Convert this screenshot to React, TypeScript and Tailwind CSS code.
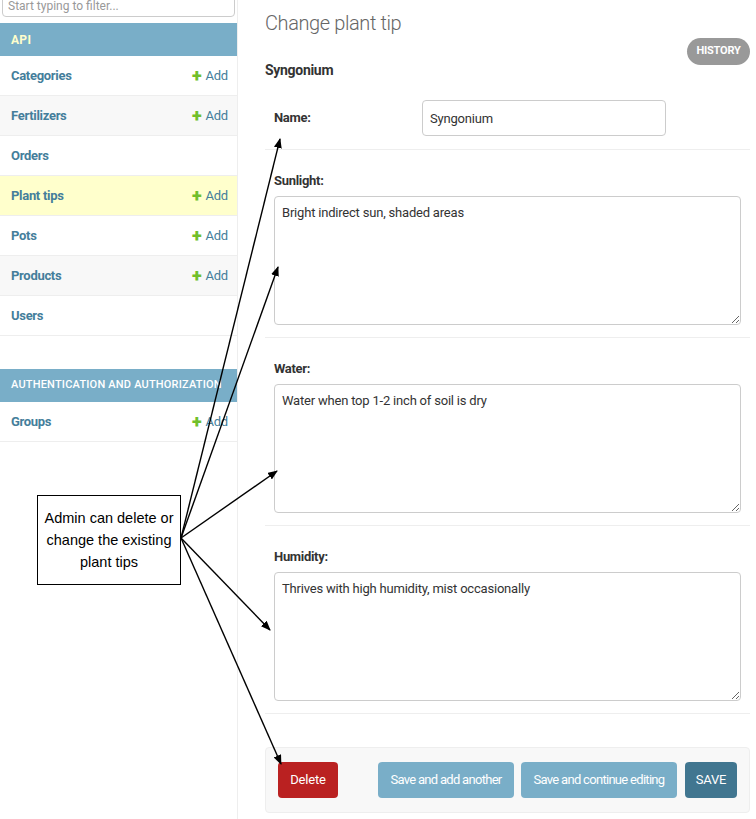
import React from 'react';

interface ModelRow {
  name: string;
  canAdd: boolean;
  tone?: 'white' | 'gray' | 'yellow';
}

const apiModels: ModelRow[] = [
  { name: 'Categories', canAdd: true, tone: 'white' },
  { name: 'Fertilizers', canAdd: true, tone: 'gray' },
  { name: 'Orders', canAdd: false, tone: 'white' },
  { name: 'Plant tips', canAdd: true, tone: 'yellow' },
  { name: 'Pots', canAdd: true, tone: 'white' },
  { name: 'Products', canAdd: true, tone: 'gray' },
  { name: 'Users', canAdd: false, tone: 'white' },
];

const toneClass = {
  white: 'bg-white',
  gray: 'bg-[#f8f8f8]',
  yellow: 'bg-[#ffffcc]',
};

const SidebarRow: React.FC<{ row: ModelRow }> = ({ row }) => (
  <div
    className={`flex h-[40px] items-center justify-between border-b border-[#eee] pl-[11px] pr-[9px] ${toneClass[row.tone ?? 'white']}`}
  >
    <span className="text-[13px] font-bold tracking-[-0.3px] text-[#447e9b]">{row.name}</span>
    {row.canAdd && (
      <span className="flex items-center gap-[4px] text-[13px] tracking-[-0.2px] text-[#447e9b]">
        <span className="text-[18px] font-black leading-none text-[#70bf2b]">+</span>
        Add
      </span>
    )}
  </div>
);

const TextField: React.FC<{ label: string; value: string }> = ({ label, value }) => (
  <div className="border-b border-[#eee] pb-[12px] pl-[9px] pr-[9px] pt-[23px]">
    <div className="h-[16px] text-[13px] font-bold leading-[16px] tracking-[-0.3px] text-[#333]">{label}</div>
    <textarea
      defaultValue={value}
      className="mt-[7px] block h-[129px] w-[467px] rounded-[4px] border border-[#ccc] px-[7px] py-[6px] text-[13px] tracking-[-0.2px] text-[#333] outline-none"
    />
  </div>
);

// callout lines all leave the right edge of the note box
const origin = { x: 181, y: 538 };
const targets = [
  { x: 280, y: 139 },
  { x: 278, y: 267 },
  { x: 277, y: 471 },
  { x: 270, y: 630 },
  { x: 281, y: 764 },
];

export default function App() {
  return (
    <div
      className="relative flex h-[819px] w-[756px] overflow-hidden bg-white"
      style={{ fontFamily: 'Roboto, "Liberation Sans", sans-serif' }}
    >
      {/* app list */}
      <aside className="w-[238px] shrink-0 border-r border-[#eee]">
        <div className="h-[17px] overflow-hidden px-[2px]">
          <div className="-mt-[14px] h-[31px] rounded-[4px] border border-[#ccc] px-[5px] pt-[12px] text-[12px] leading-[14px] text-[#999]">
            Start typing to filter...
          </div>
        </div>

        <div className="mt-[6px] flex h-[33px] items-center bg-[#79aec8] pl-[11px] text-[12px] font-bold tracking-[0.3px] text-[#ffffcc]">
          API
        </div>
        {apiModels.map((row) => (
          <SidebarRow key={row.name} row={row} />
        ))}

        <div className="mt-[33px] flex h-[33px] items-center overflow-hidden whitespace-nowrap bg-[#79aec8] pl-[11px] text-[11px] font-medium tracking-[0.2px] text-white">
          AUTHENTICATION AND AUTHORIZATION
        </div>
        <SidebarRow row={{ name: 'Groups', canAdd: true, tone: 'white' }} />
      </aside>

      {/* change form */}
      <main className="flex-1 pl-[27px] pr-[6px] pt-[11px]">
        <h1 className="h-[24px] text-[20px] font-light leading-[24px] tracking-[-0.4px] text-[#666]">Change plant tip</h1>

        <div className="flex items-start justify-between">
          <h2 className="pt-[26px] text-[14px] font-bold leading-[18px] tracking-[-0.3px] text-[#333]">Syngonium</h2>
          <span className="mt-[3px] flex h-[27px] w-[63px] items-center justify-center rounded-full bg-[#999] text-[11px] font-bold tracking-[-0.2px] text-white">
            HISTORY
          </span>
        </div>

        <div className="mt-[11px] flex items-center border-b border-[#eee] pb-[13px] pl-[9px] pt-[10px]">
          <label className="w-[148px] text-[13px] font-bold tracking-[-0.3px] text-[#333]">Name:</label>
          <input
            defaultValue="Syngonium"
            className="h-[36px] w-[244px] rounded-[4px] border border-[#ccc] px-[7px] text-[13px] tracking-[-0.2px] text-[#333] outline-none"
          />
        </div>

        <TextField label="Sunlight:" value="Bright indirect sun, shaded areas" />
        <TextField label="Water:" value="Water when top 1-2 inch of soil is dry" />
        <TextField label="Humidity:" value="Thrives with high humidity, mist occasionally" />

        <div className="mt-[33px] flex h-[66px] items-center rounded-[4px] border border-[#eee] bg-[#f8f8f8] px-[12px]">
          <span className="flex h-[36px] w-[60px] items-center justify-center rounded-[4px] bg-[#ba2121] text-[13px] tracking-[-0.2px] text-white">
            Delete
          </span>
          <div className="ml-auto flex gap-[7px]">
            <span className="flex h-[36px] w-[136px] items-center justify-center rounded-[4px] bg-[#79aec8] text-[13px] tracking-[-0.7px] text-white">
              Save and add another
            </span>
            <span className="flex h-[36px] w-[156px] items-center justify-center rounded-[4px] bg-[#79aec8] text-[13px] tracking-[-0.7px] text-white">
              Save and continue editing
            </span>
            <span className="ml-[1px] flex h-[36px] w-[52px] items-center justify-center rounded-[4px] bg-[#417690] text-[13px] tracking-[-0.2px] text-white">
              SAVE
            </span>
          </div>
        </div>
      </main>

      {/* annotation note */}
      <div
        className="absolute left-[37px] top-[495px] flex h-[90px] w-[144px] items-center justify-center border-[1.5px] border-black bg-white text-center text-[14.5px] leading-[22px] text-black"
        style={{ fontFamily: '"Liberation Sans", Arial, sans-serif' }}
      >
        Admin can delete or
        <br />
        change the existing
        <br />
        plant tips
      </div>

      <svg className="pointer-events-none absolute inset-0" width="756" height="819">
        <defs>
          <marker id="head" markerWidth="10" markerHeight="8" refX="9" refY="4" orient="auto" markerUnits="userSpaceOnUse">
            <path d="M0 0 L10 4 L0 8 Z" fill="#000" />
          </marker>
        </defs>
        {targets.map((t, i) => (
          <line key={i} x1={origin.x} y1={origin.y} x2={t.x} y2={t.y} stroke="#000" strokeWidth="1.4" markerEnd="url(#head)" />
        ))}
      </svg>
    </div>
  );
}
